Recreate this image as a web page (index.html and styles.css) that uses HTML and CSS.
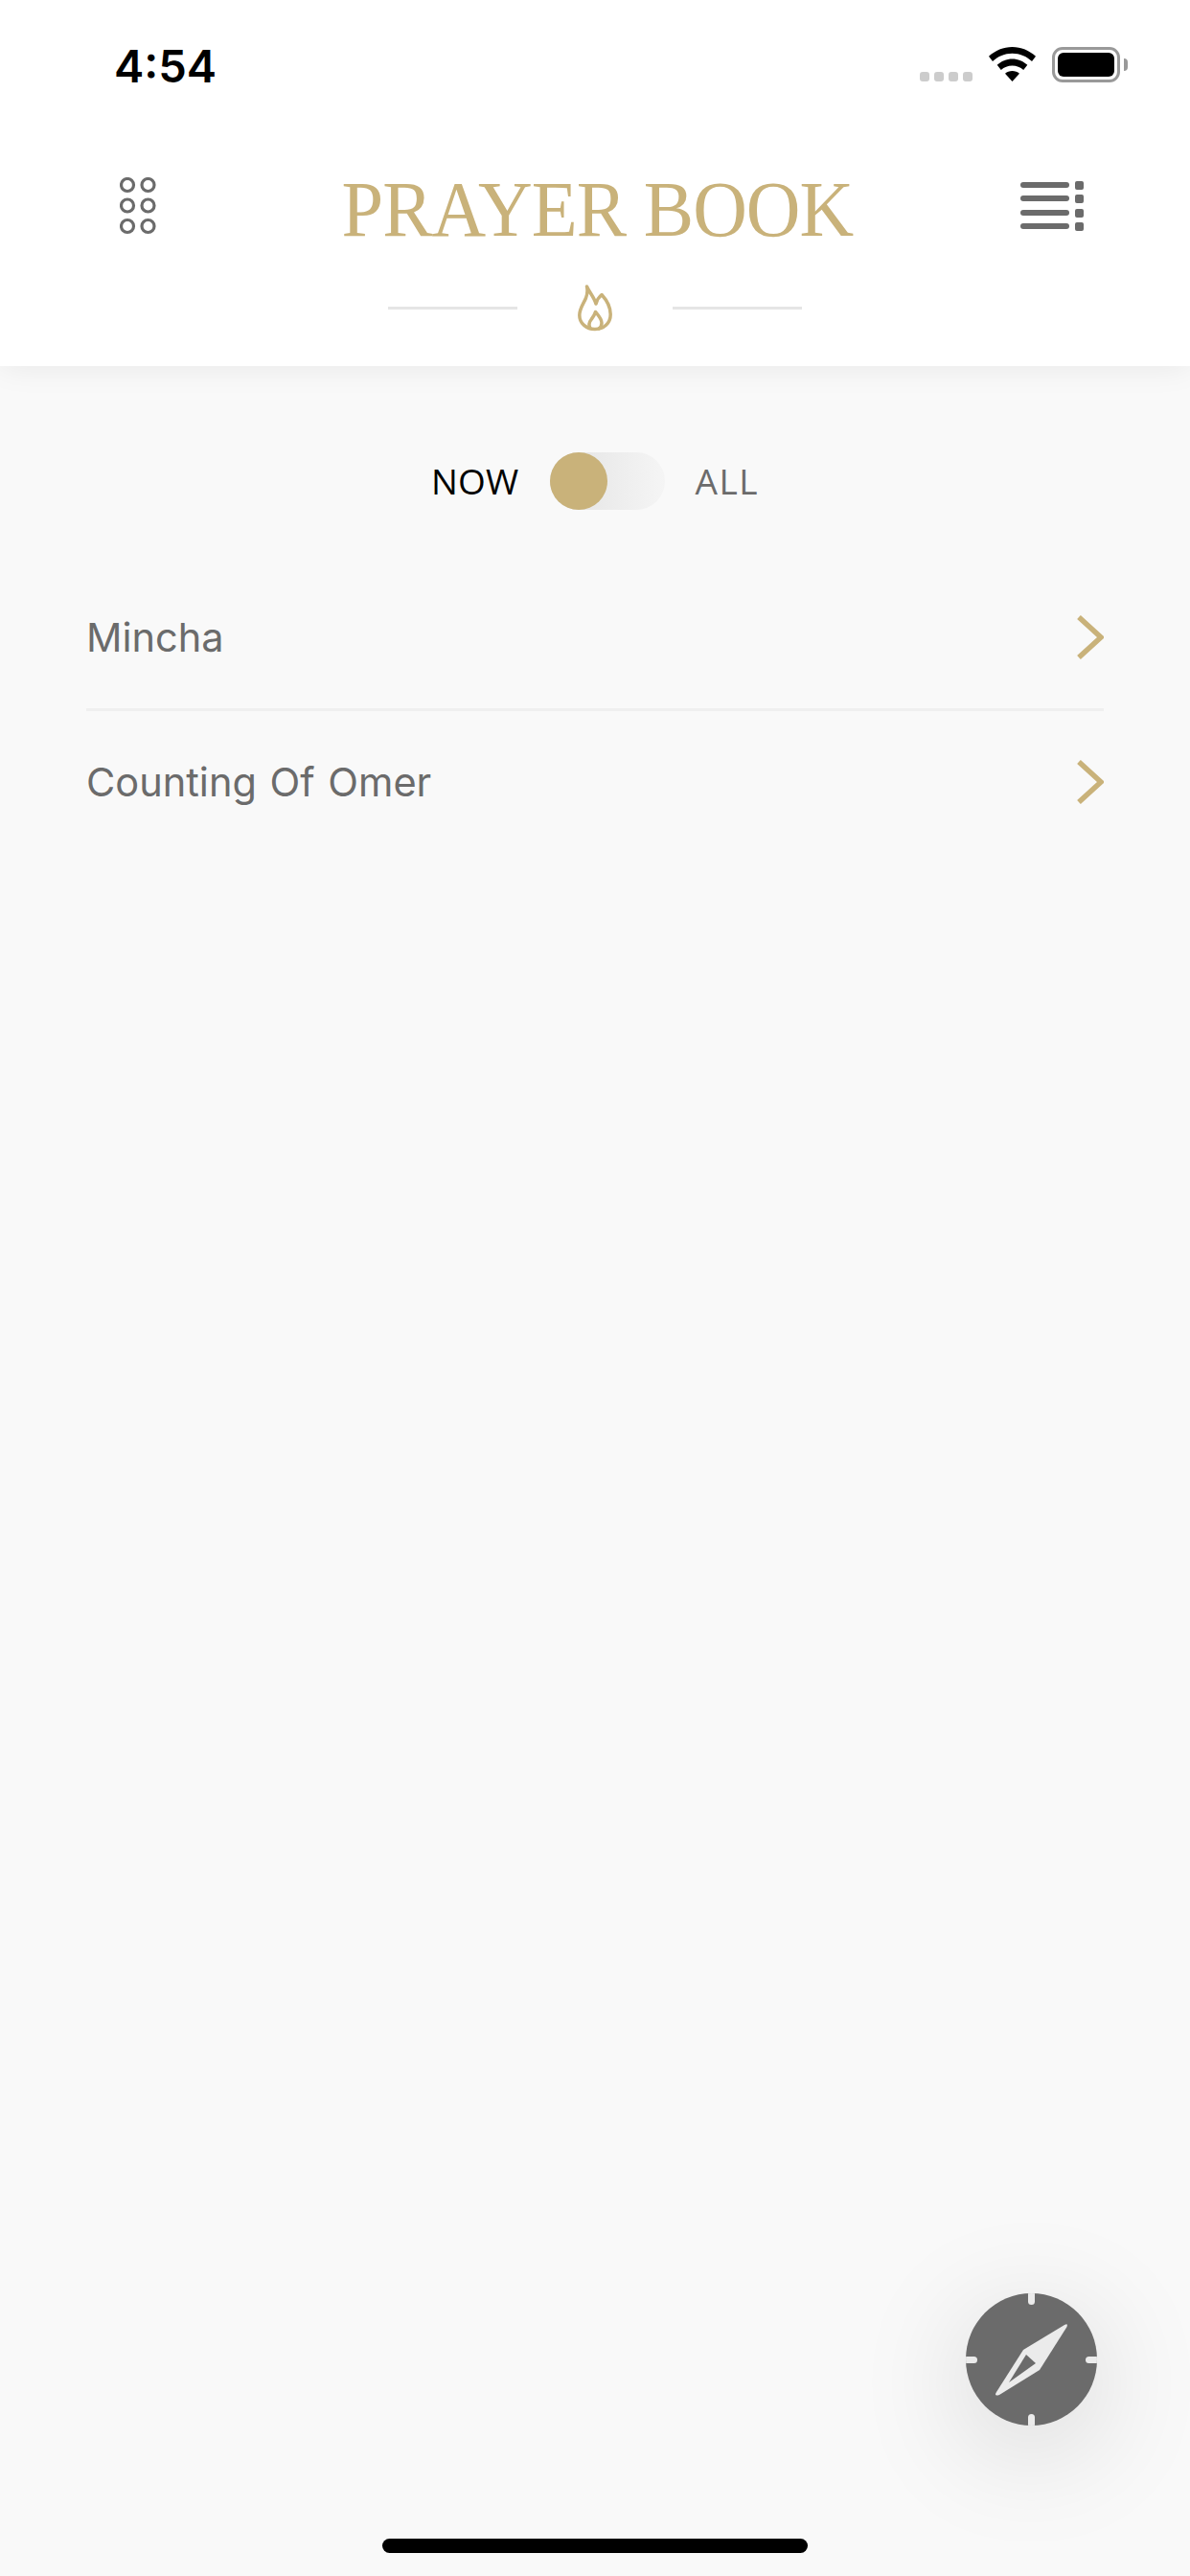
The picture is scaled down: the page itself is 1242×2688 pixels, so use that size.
FILE: index.html
```html
<!DOCTYPE html>
<html lang="en">
<head>
<meta charset="utf-8">
<title>Prayer Book</title>
<link rel="stylesheet" href="styles.css">
</head>
<body>
<div class="screen">
  <header class="header">
    <div class="status">
      <span class="time">4:54</span>
      <div class="status-icons">
        <div class="signal"><i></i><i></i><i></i><i></i></div>
        <svg class="wifi" viewBox="0 0 49 36"><path d="M24.500 0C15.300 0 6.800 3.700 0 9.700L4 15C9.600 9.900 16.800 6.800 24.500 6.800S39.400 9.900 45 15L49 9.700C42.200 3.700 33.700 0 24.500 0Z"/><path d="M24.500 12.500C18.500 12.500 13 14.900 8.700 18.800L12.800 24C16 21.200 20.100 19.500 24.500 19.500S33 21.200 36.200 24L40.300 18.800C36 14.900 30.500 12.500 24.500 12.500Z"/><path d="M24.500 25C21.700 25 19 26 17 27.700L24.500 36L32 27.700C30 26 27.300 25 24.500 25Z"/></svg>
        <div class="battery"><div class="battery-body"><div class="battery-fill"></div></div><div class="battery-nub"></div></div>
      </div>
    </div>
    <div class="bar">
      <svg class="grid-icon" viewBox="0 0 39 60"><circle cx="8" cy="8" r="6.500"/><circle cx="29.500" cy="8" r="6.500"/><circle cx="8" cy="29.500" r="6.500"/><circle cx="29.500" cy="29.500" r="6.500"/><circle cx="8" cy="51" r="6.500"/><circle cx="29.500" cy="51" r="6.500"/></svg>
      <h1 class="title">PRAYER BOOK</h1>
      <svg class="menu-icon" viewBox="0 0 66 52"><rect x="0" y="1" width="51" height="6" rx="3"/><rect x="0" y="15" width="51" height="6" rx="3"/><rect x="0" y="30" width="51" height="6" rx="3"/><rect x="0" y="44" width="51" height="6" rx="3"/><rect x="57" y="0" width="9" height="9" rx="2"/><rect x="57" y="14" width="9" height="9" rx="2"/><rect x="57" y="29" width="9" height="9" rx="2"/><rect x="57" y="43" width="9" height="9" rx="2"/></svg>
    </div>
    <div class="ornament">
      <span class="rule"></span>
      <svg class="flame" viewBox="0 0 36 49"><path d="M9.500 2C12 8 17 13 19 20C20 16 22 13 25 10.500C30 16 34.200 23 34.200 31C34.200 40.500 27 46.500 18 46.500C9 46.500 1.800 40.500 1.800 32C1.800 25 6 20 8.500 14C10 10 10.500 6 9.500 2Z"/><path d="M13 45.500C11 42 12 39 14 36.500C15.500 34.500 17.500 32 18.500 28.500C21.500 32 25 36 25 40C25 42.500 24 44.500 22 46"/></svg>
      <span class="rule"></span>
    </div>
  </header>

  <main class="content">
    <div class="toggle-row">
      <span class="toggle-label active">NOW</span>
      <div class="toggle"><div class="thumb"></div></div>
      <span class="toggle-label">ALL</span>
    </div>
    <ul class="list">
      <li class="item"><span>Mincha</span><svg class="chevron" viewBox="0 0 28 46"><path d="M2 2L25 23L2 44"/></svg></li>
      <li class="item"><span>Counting Of Omer</span><svg class="chevron" viewBox="0 0 28 46"><path d="M2 2L25 23L2 44"/></svg></li>
    </ul>
  </main>

  <button class="fab" aria-label="Compass">
    <svg viewBox="0 0 137 138"><rect class="tick" x="65" y="-6" width="7" height="18" rx="3.500"/><rect class="tick" x="65" y="126" width="7" height="18" rx="3.500"/><rect class="tick" x="-6" y="66" width="18" height="7" rx="3.500"/><rect class="tick" x="125" y="66" width="18" height="7" rx="3.500"/><path class="needle" d="M60 59L103 33Q107 31 105.500 35L77 80L35 106Q29 108 32 103Z"/><path class="needle-in" d="M63 64L73 73L45 93Z"/></svg>
  </button>
  <div class="home-indicator"></div>
</div>
</body>
</html>
```

FILE: styles.css
```css
* { box-sizing: border-box; }
html, body { margin: 0; padding: 0; }
body { width: 1242px; height: 2688px; background: #f9f9f9; font-family: "Inter", sans-serif; overflow: hidden; }
.screen { position: relative; width: 1242px; height: 2688px; background: #f9f9f9; overflow: hidden; }

.header { position: relative; height: 382px; background: #fff; box-shadow: 0 0 32px rgba(0,0,0,.08); }
.status { height: 185px; padding: 40px 65px 0 119px; display: flex; justify-content: space-between; align-items: flex-start; }
.time { font-size: 47px; font-weight: 600; line-height: 58px; color: #000; }
.status-icons { display: flex; align-items: flex-start; padding-top: 9px; }
.signal { display: flex; gap: 5px; margin-top: 26px; margin-right: 17px; }
.signal i { width: 10px; height: 10px; border-radius: 3px; background: #ccc; }
.wifi { width: 49px; height: 36px; fill: #000; margin-right: 17px; }
.battery { display: flex; align-items: center; height: 37px; }
.battery-body { width: 71px; height: 37px; border: 3px solid #999; border-radius: 11px; padding: 3px; }
.battery-fill { width: 100%; height: 100%; background: #000; border-radius: 6px; }
.battery-nub { width: 4px; height: 13px; margin-left: 4px; background: #999; border-radius: 0 6px 6px 0; }

.bar { display: grid; grid-template-columns: 1fr auto 1fr; align-items: start; padding: 0 111px 0 115px; height: 110px; }
.grid-icon { width: 39px; height: 60px; margin-left: 10px; fill: none; stroke: #6b6b6b; stroke-width: 3.200; }
.title { margin: -15px 0 0; font-family: "Liberation Serif", serif; font-weight: 400; font-size: 83px; line-height: 96px; letter-spacing: -1px; color: #c9b27a; white-space: nowrap; transform: scaleX(.945); }
.menu-icon { width: 66px; height: 52px; margin-top: 4px; justify-self: end; fill: #6b6b6b; }

.ornament { position: absolute; left: 405px; top: 297px; width: 432px; height: 49px; display: flex; align-items: center; justify-content: space-between; }
.rule { width: 135px; height: 3px; margin-top: -1px; background: #e5e5e5; }
.flame { width: 36px; height: 49px; fill: none; stroke: #c9b27a; stroke-width: 3.500; stroke-linejoin: round; stroke-linecap: round; }

.content { padding: 90px 90px 0; }
.toggle-row { display: flex; align-items: center; justify-content: center; height: 60px; }
.toggle-label { font-family: "Open Sans", sans-serif; font-size: 37px; line-height: 60px; letter-spacing: 1.500px; color: #6b6b6b; }
.toggle-label.active { color: #000; letter-spacing: .3px; }
.toggle { width: 120px; height: 60px; margin: 0 32px; border-radius: 30px; background: linear-gradient(90deg, #e2e2e2, #f5f5f5); }
.thumb { width: 60px; height: 60px; border-radius: 50%; background: #c9b27a; }

.list { list-style: none; margin: 57px 0 0; padding: 0; }
.item { height: 150px; padding-top: 2px; display: flex; align-items: center; justify-content: space-between; font-size: 41.500px; font-weight: 400; word-spacing: 2px; color: #6b6b6b; }
.item + .item { padding-top: 0; border-top: 3px solid #efefef; }
.chevron { width: 28px; height: 46px; fill: none; stroke: #c9b27a; stroke-width: 5.500; }

.fab { position: absolute; left: 1008px; top: 2393px; width: 137px; height: 138px; padding: 0; border: 0; border-radius: 50%; background: #6b6b6b; box-shadow: 0 24px 120px rgba(0,0,0,.15); }
.fab svg { display: block; width: 137px; height: 138px; overflow: hidden; border-radius: 50%; }
.tick { fill: #ebebeb; }
.needle { fill: #ebebeb; }
.needle-in { fill: #6b6b6b; }

.home-indicator { position: absolute; left: 399px; top: 2649px; width: 444px; height: 15px; border-radius: 8px; background: #000; }
```
